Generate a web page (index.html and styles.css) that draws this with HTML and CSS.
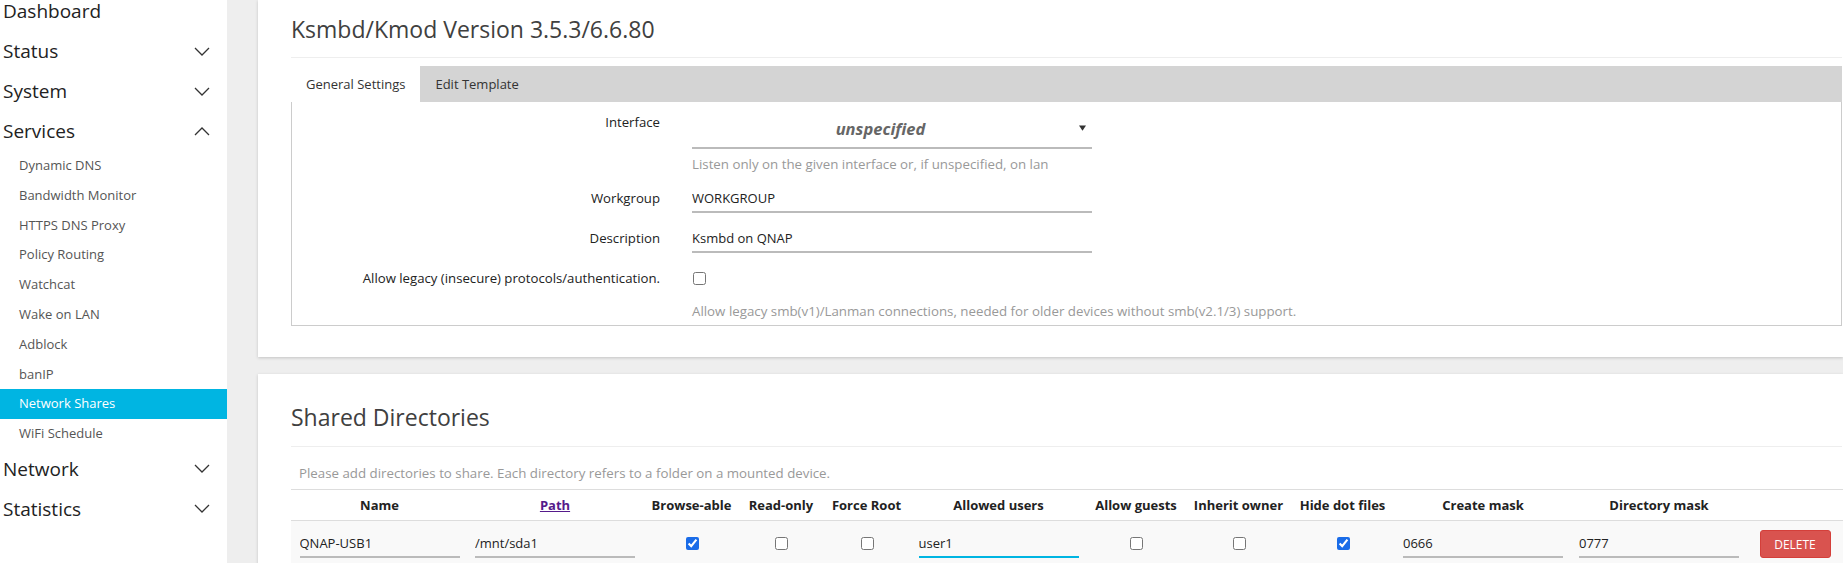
FILE: index.html
```html
<!DOCTYPE html>
<html>
<head>
  <meta charset="utf-8">
  <link rel="stylesheet" href="styles.css">
</head>
<body>
  <div class="layout">
    <aside class="sidebar">
      <ul class="menu">
        <li class="menu-item"><a class="menu-link">Dashboard</a></li>
        <li class="menu-item">
          <a class="menu-link">Status
            <svg class="chevron" viewBox="0 0 16 9"><polyline points="1,1 8,8 15,1"/></svg>
          </a>
        </li>
        <li class="menu-item">
          <a class="menu-link">System
            <svg class="chevron" viewBox="0 0 16 9"><polyline points="1,1 8,8 15,1"/></svg>
          </a>
        </li>
        <li class="menu-item open">
          <a class="menu-link">Services
            <svg class="chevron" viewBox="0 0 16 9"><polyline points="1,8 8,1 15,8"/></svg>
          </a>
          <ul class="submenu">
            <li><a>Dynamic DNS</a></li>
            <li><a>Bandwidth Monitor</a></li>
            <li><a>HTTPS DNS Proxy</a></li>
            <li><a>Policy Routing</a></li>
            <li><a>Watchcat</a></li>
            <li><a>Wake on LAN</a></li>
            <li><a>Adblock</a></li>
            <li><a>banIP</a></li>
            <li class="active"><a>Network Shares</a></li>
            <li><a>WiFi Schedule</a></li>
          </ul>
        </li>
        <li class="menu-item">
          <a class="menu-link">Network
            <svg class="chevron" viewBox="0 0 16 9"><polyline points="1,1 8,8 15,1"/></svg>
          </a>
        </li>
        <li class="menu-item">
          <a class="menu-link">Statistics
            <svg class="chevron" viewBox="0 0 16 9"><polyline points="1,1 8,8 15,1"/></svg>
          </a>
        </li>
      </ul>
    </aside>

    <main class="main">
      <section class="card card-settings">
        <h2 class="card-title">Ksmbd/Kmod Version 3.5.3/6.6.80</h2>
        <div class="tabs">
          <ul class="tab-bar">
            <li class="tab active">General Settings</li>
            <li class="tab">Edit Template</li>
          </ul>
          <div class="tab-panel">
            <div class="field">
              <label class="field-label">Interface</label>
              <div class="field-value">
                <div class="select">
                  <span class="select-text">unspecified</span>
                  <svg class="caret" viewBox="0 0 8 6"><polygon points="0,0 8,0 4,6"/></svg>
                </div>
                <div class="field-help">Listen only on the given interface or, if unspecified, on lan</div>
              </div>
            </div>
            <div class="field">
              <label class="field-label">Workgroup</label>
              <div class="field-value">
                <input class="text-input" type="text" value="WORKGROUP">
              </div>
            </div>
            <div class="field">
              <label class="field-label">Description</label>
              <div class="field-value">
                <input class="text-input" type="text" value="Ksmbd on QNAP">
              </div>
            </div>
            <div class="field">
              <label class="field-label">Allow legacy (insecure) protocols/authentication.</label>
              <div class="field-value">
                <div class="check-wrap"><input type="checkbox"></div>
                <div class="field-help help-check">Allow legacy smb(v1)/Lanman connections, needed for older devices without smb(v2.1/3) support.</div>
              </div>
            </div>
          </div>
        </div>
      </section>

      <section class="card card-shares">
        <h2 class="card-title">Shared Directories</h2>
        <p class="card-desc">Please add directories to share. Each directory refers to a folder on a mounted device.</p>
        <table class="shares">
          <colgroup>
            <col style="width:177px">
            <col style="width:174px">
            <col style="width:99px">
            <col style="width:80px">
            <col style="width:91px">
            <col style="width:173px">
            <col style="width:102px">
            <col style="width:103px">
            <col style="width:105px">
            <col style="width:176px">
            <col style="width:176px">
            <col style="width:96px">
          </colgroup>
          <tr>
            <th>Name</th>
            <th><a class="sort-link">Path</a></th>
            <th>Browse-able</th>
            <th>Read-only</th>
            <th>Force Root</th>
            <th>Allowed users</th>
            <th>Allow guests</th>
            <th>Inherit owner</th>
            <th>Hide dot files</th>
            <th>Create mask</th>
            <th>Directory mask</th>
            <th></th>
          </tr>
          <tr class="row">
            <td><input class="cell-input" type="text" value="QNAP-USB1"></td>
            <td><input class="cell-input" type="text" value="/mnt/sda1"></td>
            <td><input type="checkbox" checked></td>
            <td><input type="checkbox"></td>
            <td><input type="checkbox"></td>
            <td><input class="cell-input focused" type="text" value="user1"></td>
            <td><input type="checkbox"></td>
            <td><input type="checkbox"></td>
            <td><input type="checkbox" checked></td>
            <td><input class="cell-input" type="text" value="0666"></td>
            <td><input class="cell-input" type="text" value="0777"></td>
            <td><button class="btn-delete">Delete</button></td>
          </tr>
        </table>
      </section>
    </main>
  </div>
</body>
</html>
```

FILE: styles.css
```css
html, body {
  margin: 0;
  padding: 0;
  height: 100%;
  overflow: hidden;
}

body {
  font-family: "Open Sans", "Noto Sans", sans-serif;
  color: #222;
  background: #eee;
}

.layout {
  display: flex;
  min-height: 100%;
}

/* sidebar */

.sidebar {
  width: 227px;
  flex: none;
  background: #fff;
}

.menu {
  list-style: none;
  margin: -9px 0 0;
  padding: 0;
}

.menu-link {
  display: flex;
  align-items: center;
  justify-content: space-between;
  height: 40px;
  padding: 0 17px 0 3px;
  font-size: 19px;
  color: #222;
}

.chevron {
  width: 16px;
  height: 9px;
  fill: none;
  stroke: #333;
  stroke-width: 1.3;
}

.submenu {
  list-style: none;
  margin: 0;
  padding: 0;
}

.submenu li a {
  display: block;
  height: 29.8px;
  line-height: 29.8px;
  padding-left: 19px;
  font-size: 13px;
  color: #555;
}

.submenu li.active a {
  background: #00b5e2;
  color: #fff;
}

/* content */

.main {
  flex: 1;
  padding-left: 31px;
  min-width: 0;
}

.card {
  background: #fff;
  box-shadow: 0 1px 3px rgba(0, 0, 0, 0.18);
  padding: 0 1px 0 33px;
}

.card-settings {
  padding-top: 16px;
  padding-bottom: 31px;
}

.card-shares {
  margin-top: 17px;
  padding-top: 30px;
  padding-bottom: 20px;
}

.card-title {
  margin: 0;
  padding-bottom: 15px;
  border-bottom: 1px solid #eee;
  font-size: 23px;
  line-height: 27px;
  font-weight: normal;
  color: #404040;
}

.card-settings .card-title {
  padding-bottom: 14px;
}

/* tabs */

.tabs {
  margin-top: 8px;
}

.tab-bar {
  display: flex;
  list-style: none;
  margin: 0;
  padding: 0;
  height: 36px;
  background: #d4d4d4;
}

.tab {
  padding: 0 15px;
  line-height: 36px;
  font-size: 13px;
  color: #333;
}

.tab.active {
  background: #fff;
}

.tab-panel {
  border: 1px solid #ccc;
  border-top: none;
  padding: 7px 0 5px;
}

.field {
  display: grid;
  grid-template-columns: 368px 400px;
  column-gap: 32px;
  margin-bottom: 12px;
}

.field:last-child {
  margin-bottom: 0;
}

.field-label {
  text-align: right;
  padding-top: 3px;
  font-size: 13.2px;
  line-height: 20px;
  color: #222;
}

.select {
  display: flex;
  align-items: center;
  height: 38px;
  border-bottom: 2px solid #bbb;
}

.select-text {
  flex: 1;
  text-align: center;
  font-size: 16.5px;
  font-weight: bold;
  font-style: italic;
  color: #666;
  padding-left: 2px;
}

.caret {
  width: 7px;
  height: 6px;
  margin: 0 6px 0 12px;
  fill: #333;
}

.field-help {
  margin-top: 6px;
  font-size: 13.3px;
  line-height: 18px;
  color: #999;
  white-space: nowrap;
}

.help-check {
  margin-top: 10px;
}

.text-input,
.cell-input {
  box-sizing: border-box;
  display: block;
  height: 28px;
  padding: 0;
  border: none;
  border-bottom: 2px solid #bbb;
  background: transparent;
  font-family: inherit;
  font-size: 13px;
  color: #222;
  outline: none;
}

.text-input {
  width: 400px;
}

.check-wrap {
  display: flex;
  align-items: center;
  height: 27px;
}

input[type="checkbox"] {
  width: 13px;
  height: 13px;
  margin: 0 0 0 1px;
  accent-color: #1a6ce8;
}

/* shared directories */

.card-desc {
  margin: 17px 0 7px 8px;
  font-size: 13.3px;
  line-height: 18px;
  color: #999;
}

.shares {
  border-collapse: collapse;
  table-layout: fixed;
  width: 1552px;
}

.shares th {
  height: 30px;
  padding: 0;
  border-top: 1px solid #ddd;
  border-bottom: 1px solid #ddd;
  font-size: 13px;
  font-weight: bold;
  color: #222;
  text-align: center;
}

.sort-link {
  color: #551a8b;
  text-decoration: underline;
}

.shares td {
  padding: 9px 0 8px;
  text-align: center;
  background: #f9f9f9;
}

.cell-input {
  width: 160px;
  margin: 0 auto;
}

.cell-input.focused {
  border-bottom-color: #00b5e2;
}

.btn-delete {
  width: 71px;
  height: 28px;
  padding: 0;
  border: 1px solid #d43f3a;
  border-radius: 3px;
  background: #d9534f;
  color: #fff;
  font-family: inherit;
  font-size: 12px;
  text-transform: uppercase;
}
```
